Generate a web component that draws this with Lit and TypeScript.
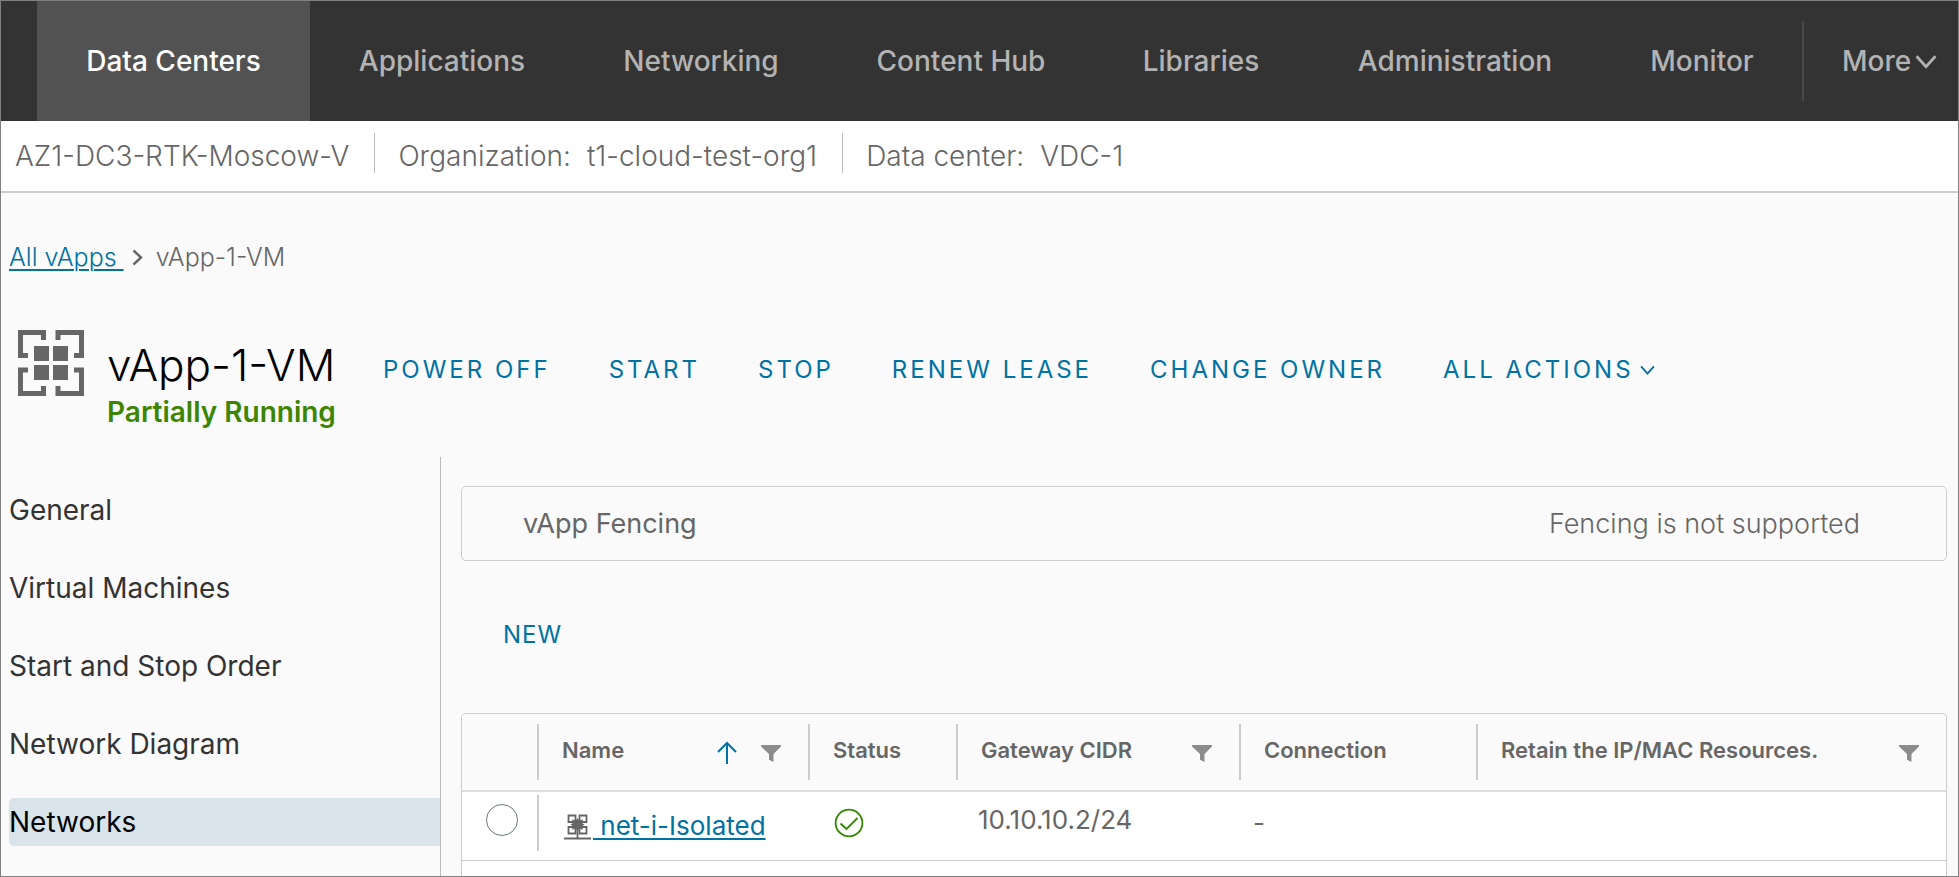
import { LitElement, html, css, svg, nothing } from "lit";
import { customElement, property } from "lit/decorators.js";
import { classMap } from "lit/directives/class-map.js";

interface Column {
  id: string;
  label: string;
  sorted?: boolean;
  filter?: boolean;
}

const TABS = [
  "Data Centers",
  "Applications",
  "Networking",
  "Content Hub",
  "Libraries",
  "Administration",
  "Monitor",
];

const ACTIONS = ["Power off", "Start", "Stop", "Renew lease", "Change owner"];

const SECTIONS = [
  "General",
  "Virtual Machines",
  "Start and Stop Order",
  "Network Diagram",
  "Networks",
];

const COLUMNS: Column[] = [
  { id: "name", label: "Name", sorted: true, filter: true },
  { id: "status", label: "Status" },
  { id: "gateway", label: "Gateway CIDR", filter: true },
  { id: "connection", label: "Connection" },
  { id: "retain", label: "Retain the IP/MAC Resources.", filter: true },
];

const chevronDown = svg`<path d="M1.5 2 10.5 12 19.5 2" fill="none" stroke="currentColor" stroke-width="2.6"/>`;

@customElement("top-nav")
export class TopNav extends LitElement {
  static styles = css`
    :host {
      display: block;
      background: #333;
    }
    .bar {
      display: grid;
      grid-template-columns: minmax(0, 1765fr) minmax(0, 156fr);
      height: 120px;
      padding-left: 36px;
    }
    .tabs {
      display: grid;
      grid-template-columns: 273fr 264fr 254fr 266fr 214fr 294fr 200fr;
    }
    .tab,
    .more {
      display: flex;
      align-items: center;
      justify-content: center;
      color: #b3b3b3;
      font: 500 28px/36px Inter, sans-serif;
      text-decoration: none;
      white-space: nowrap;
    }
    .active {
      background: #525252;
      color: #fff;
    }
    .more {
      justify-content: flex-start;
      gap: 4px;
      border: 0;
      padding: 0 0 0 38px;
      margin: 20px 0;
      border-left: 2px solid #484848;
      background: none;
    }
    .caret {
      width: 22px;
      height: 15px;
    }
  `;

  render() {
    return html`
      <nav class="bar" aria-label="Main">
        <div class="tabs">
          ${TABS.map(
            (tab, i) =>
              html`<a class=${classMap({ tab: true, active: i === 0 })} href="#">${tab}</a>`
          )}
        </div>
        <button class="more" type="button">
          More
          <svg class="caret" viewBox="0 0 21 14" aria-hidden="true">${chevronDown}</svg>
        </button>
      </nav>
    `;
  }
}

@customElement("networks-grid")
export class NetworksGrid extends LitElement {
  @property() name = "net-i-Isolated";
  @property() gateway = "10.10.10.2/24";

  static styles = css`
    :host {
      display: block;
      border: 1px solid #ccc;
      border-bottom: 0;
      border-radius: 5px 5px 0 0;
      background: #fff;
      color: #666;
      overflow: hidden;
    }
    .table {
      width: 100%;
      table-layout: fixed;
      border-collapse: collapse;
    }
    .c-select { width: 75px; }
    .c-name { width: 271px; }
    .c-status { width: 148px; }
    .c-gateway { width: 283px; }
    .c-connection { width: 237px; }
    .head {
      background: #fafafa;
    }
    .head-cell,
    .cell {
      padding: 0;
      text-align: left;
      border-bottom: 1px solid #ccc;
    }
    .head-cell {
      height: 76px;
      border-bottom: 2px solid #ddd;
    }
    .cell {
      height: 62px;
      padding-bottom: 6px;
      font: 400 26px/32px Inter, sans-serif;
    }
    .inner {
      display: flex;
      align-items: center;
      gap: 24px;
      height: 56px;
      padding: 0 27px 0 23px;
      border-left: 2px solid #ccc;
      font: 600 22px/32px Inter, sans-serif;
      white-space: nowrap;
    }
    .label {
      flex: 1;
      padding-bottom: 4px;
    }
    .tool {
      display: flex;
      border: 0;
      padding: 0;
      background: none;
    }
    .arrow { width: 20px; height: 23px; }
    .funnel { width: 20px; height: 17px; padding-top: 3px; }
    .name-cell {
      display: flex;
      align-items: center;
      gap: 2px;
      height: 56px;
      padding: 6px 0 0 25px;
      border-left: 2px solid #ccc;
      box-sizing: border-box;
    }
    .net-icon { width: 27px; height: 27px; }
    .link {
      color: #0072a3;
      white-space: pre;
      text-underline-offset: 3px;
      text-decoration-thickness: 2px;
    }
    .pick {
      display: block;
      appearance: none;
      width: 32px;
      height: 32px;
      margin: 0 0 6px 24px;
      border: 1px solid #6a7a81;
      border-radius: 50%;
      background: #fff;
    }
    .ok {
      display: block;
      width: 30px;
      height: 30px;
      margin-left: 26px;
    }
    .gateway { padding: 0 0 6px 22px; }
    .connection { padding-left: 14px; }
  `;

  private funnel(label: string) {
    return html`<button class="tool" type="button" aria-label="Filter ${label}">
      <svg class="funnel" viewBox="0 0 20 17" aria-hidden="true">
        <path d="M0 0H20V1.5L12.5 9V17L8 14.8V9L0 1.5Z" fill="#8c8c8c" />
      </svg>
    </button>`;
  }

  render() {
    return html`
      <table class="table">
        <colgroup>
          <col class="c-select" />
          ${COLUMNS.map((c) => html`<col class="c-${c.id}" />`)}
        </colgroup>
        <thead class="head">
          <tr>
            <td class="head-cell"></td>
            ${COLUMNS.map(
              (c) => html`<th class="head-cell" scope="col">
                <div class="inner">
                  <span class="label">${c.label}</span>
                  ${c.sorted
                    ? html`<button class="tool" type="button" aria-label="Sort ${c.label}">
                        <svg class="arrow" viewBox="0 0 20 23" aria-hidden="true">
                          <path
                            d="M10 23V2M1 11 10 2 19 11"
                            fill="none"
                            stroke="#0072a3"
                            stroke-width="2"
                          />
                        </svg>
                      </button>`
                    : nothing}
                  ${c.filter ? this.funnel(c.label) : nothing}
                </div>
              </th>`
            )}
          </tr>
        </thead>
        <tbody>
          <tr>
            <td class="cell">
              <input class="pick" type="radio" name="network" aria-label="Select ${this.name}" />
            </td>
            <td class="cell">
              <div class="name-cell">
                <svg class="net-icon" viewBox="0 0 27 27" aria-hidden="true">
                  <g fill="none" stroke="#666" stroke-width="1.8">
                    <path d="M4.5 2.5H11.5V9H4.5ZM15.500 2.500H22.500V9H15.500ZM4.500 14H11.500V20.500H4.500ZM15.500 14H22.500V20.500H15.500Z" />
                    <path d="M13.500 16V25M0 25.500H27" />
                  </g>
                  <path
                    d="M13.500 5 15.200 7.500 19 6.500 18 10 20.500 11.500 18 13.200 19 16.800 15.200 15.500 13.500 18 11.800 15.500 8 16.800 9 13.200 6.500 11.500 9 10 8 6.500 11.800 7.500Z"
                    fill="#666"
                  />
                </svg>
                <a class="link" href="#">${" " + this.name}</a>
              </div>
            </td>
            <td class="cell">
              <svg class="ok" viewBox="0 0 30 30" role="img" aria-label="Connected">
                <g fill="none" stroke="#318700" stroke-width="1.8">
                  <circle cx="15" cy="15" r="13.400" />
                  <path d="M6.500 15.500 12.500 21 23.500 10" />
                </g>
              </svg>
            </td>
            <td class="cell"><div class="gateway">${this.gateway}</div></td>
            <td class="cell"><div class="connection">-</div></td>
            <td class="cell"></td>
          </tr>
        </tbody>
      </table>
    `;
  }
}

@customElement("app-root")
export class AppRoot extends LitElement {
  static styles = css`
    :host {
      display: flex;
      flex-direction: column;
      box-sizing: border-box;
      height: 100vh;
      overflow: hidden;
      border: 1px solid #808080;
      background: #fafafa;
      color: #666;
      font: 400 28px/36px Inter, sans-serif;
    }
    .context {
      display: flex;
      flex: none;
      height: 58px;
      padding-top: 12px;
      border-bottom: 2px solid #ccc;
      background: #fff;
      font-weight: 300;
      white-space: nowrap;
    }
    .fact {
      display: flex;
      gap: 16px;
      box-sizing: border-box;
      height: 40px;
      line-height: 46px;
      padding: 0 25px 0 23px;
      border-left: 1px solid #bbb;
    }
    .fact:first-child {
      padding-left: 14px;
      border-left: 0;
    }
    .crumbs {
      display: flex;
      align-items: center;
      gap: 8px;
      margin-top: 46px;
      padding-left: 8px;
      font-size: 25px;
      font-weight: 300;
    }
    .crumb-link {
      color: #0072a3;
      white-space: pre;
      text-underline-offset: 3px;
      text-decoration-thickness: 2px;
    }
    .crumb-sep { width: 11px; height: 17px; }
    .here { padding-left: 5px; }
    .heading {
      display: flex;
      align-items: flex-start;
      margin-top: 55px;
      padding-left: 17px;
    }
    .vapp-icon {
      width: 66px;
      height: 66px;
      margin: 0 23px 0 0;
    }
    .titles {
      width: 230px;
      padding-top: 10px;
      white-space: nowrap;
    }
    .title {
      margin: 0;
      color: #000;
      font-size: 44px;
      line-height: 50px;
      font-weight: 300;
    }
    .state {
      color: #3c8500;
      line-height: 44px;
      font-weight: 600;
    }
    .actions {
      display: flex;
      gap: 58px;
      padding: 22px 0 0 46px;
    }
    .action {
      display: flex;
      align-items: center;
      gap: 6px;
      border: 0;
      padding: 0;
      background: none;
      color: #0072a3;
      font: 400 24px/36px Inter, sans-serif;
      letter-spacing: 3px;
      text-transform: uppercase;
      white-space: nowrap;
    }
    .caret { width: 15px; height: 10px; }
    .body {
      display: grid;
      grid-template-columns: 440px 1fr;
      flex: 1;
      margin-top: 23px;
      min-height: 0;
    }
    .side {
      display: flex;
      flex-direction: column;
      gap: 30px;
      padding: 29px 0 0 8px;
      border-right: 1px solid #bbb;
    }
    .section {
      border-radius: 5px 0 0 5px;
      color: #333;
      line-height: 48px;
      text-decoration: none;
    }
    .current {
      background: #d9e4ea;
      color: #000;
    }
    .content {
      display: flex;
      flex-direction: column;
      align-items: stretch;
      padding: 29px 11px 0 20px;
      min-height: 0;
    }
    .fencing {
      display: flex;
      justify-content: space-between;
      padding: 19px 86px 18px 61px;
      border: 1px solid #ccc;
      border-radius: 5px;
      font-size: 27px;
    }
    .note { font-weight: 300; }
    .new {
      align-self: flex-start;
      margin: 56px 0 60px 42px;
      letter-spacing: 1px;
    }
    .grid {
      flex: 1;
    }
  `;

  render() {
    return html`
      <top-nav></top-nav>
      <div class="context">
        <div class="fact">AZ1-DC3-RTK-Moscow-V</div>
        <div class="fact"><span>Organization:</span><span>t1-cloud-test-org1</span></div>
        <div class="fact"><span>Data center:</span><span>VDC-1</span></div>
      </div>
      <nav class="crumbs" aria-label="Breadcrumb">
        <a class="crumb-link" href="#">${"All vApps "}</a>
        <svg class="crumb-sep" viewBox="0 0 11 17" aria-hidden="true">
          <path d="M1.500 1.500 9 8.500 1.500 15.500" fill="none" stroke="#666" stroke-width="2.400" />
        </svg>
        <span class="here">vApp-1-VM</span>
      </nav>
      <header class="heading">
        <svg class="vapp-icon" viewBox="0 0 66 66" aria-hidden="true">
          <g fill="none" stroke="#666" stroke-width="5">
            <path d="M25.500 10V2.500H2.500V25.500H10" />
            <path d="M40 10V2.500H63.500V25.500H56" />
            <path d="M25.500 56V63.500H2.500V40H10" />
            <path d="M40 56V63.500H63.500V40H56" />
          </g>
          <path d="M16 16H31V31H16ZM35 16H50V31H35ZM16 35H31V50H16ZM35 35H50V50H35Z" fill="#666" />
        </svg>
        <div class="titles">
          <h1 class="title">vApp-1-VM</h1>
          <div class="state">Partially Running</div>
        </div>
        <div class="actions">
          ${ACTIONS.map((a) => html`<button class="action" type="button">${a}</button>`)}
          <button class="action" type="button">
            All actions
            <svg class="caret" viewBox="0 0 21 14" aria-hidden="true">${chevronDown}</svg>
          </button>
        </div>
      </header>
      <div class="body">
        <nav class="side" aria-label="vApp sections">
          ${SECTIONS.map(
            (s) =>
              html`<a class=${classMap({ section: true, current: s === "Networks" })} href="#">${s}</a>`
          )}
        </nav>
        <main class="content">
          <div class="fencing">
            <span>vApp Fencing</span>
            <span class="note">Fencing is not supported</span>
          </div>
          <button class="action new" type="button">New</button>
          <networks-grid class="grid"></networks-grid>
        </main>
      </div>
    `;
  }
}
